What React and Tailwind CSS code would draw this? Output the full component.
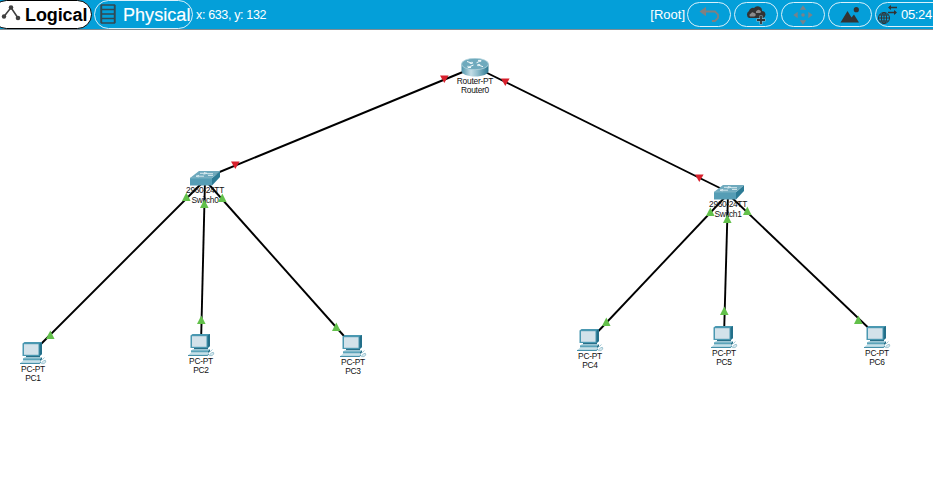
const pcs = [
  { name: 'PC1', x: 20, y: 342 },
  { name: 'PC2', x: 188, y: 334 },
  { name: 'PC3', x: 340, y: 335 },
  { name: 'PC4', x: 577, y: 329 },
  { name: 'PC5', x: 711, y: 326 },
  { name: 'PC6', x: 864, y: 326 },
];

const links = [
  [475, 67, 205, 178],
  [475, 67, 728, 192],
  [205, 180, 33, 352],
  [205, 180, 201, 344],
  [205, 180, 352, 345],
  [728, 194, 590, 340],
  [728, 194, 724, 336],
  [728, 194, 877, 336],
];

const down = [[444, 79], [505, 82], [235, 165], [699, 178]];
const up = [
  [186, 197], [204, 204], [222, 198], [710, 212], [727, 219], [747, 211],
  [50, 335], [201, 320], [336, 327], [606, 322], [724, 311], [858, 320],
];

function Links() {
  return (
    <svg className="absolute left-0 top-0" width="933" height="477" viewBox="0 0 933 477">
      {links.map(([a, b, c, d], i) => (
        <line key={i} x1={a} y1={b} x2={c} y2={d} stroke="#000" strokeWidth="1.9" />
      ))}
    </svg>
  );
}

function Status() {
  return (
    <svg className="absolute left-0 top-0" width="933" height="477" viewBox="0 0 933 477">
      {down.map(([x, y], i) => (
        <path key={i} d={`M${x - 4} ${y - 3.5}h8.6l-4.3 7.5z`} fill="#d8202c" />
      ))}
      {up.map(([x, y], i) => (
        <path key={i} d={`M${x - 4} ${y + 4}h8.6l-4.3-8.5z`} fill="#62c04a" />
      ))}
    </svg>
  );
}

function PcIcon() {
  return (
    <svg width="28" height="23" viewBox="0 0 28 23">
      <path d="M2.5 1.5L4.5 0h17.5v12l-2 2H2.5z" fill="#4a98b1" />
      <path d="M19.5 1.5L22 0v12l-2.5 2z" fill="#236f89" />
      <path d="M4 2.2h14.5v10.6H4z" fill="#d3e2ea" />
      <path d="M6 14h14v1.5H6z" fill="#286f88" />
      <path d="M3 16.5l2-1.3h17l-2 2H3z" fill="#a2cbd8" />
      <path d="M3 16.5h17v2H3z" fill="#5ba3b9" />
      <path d="M20 17l2-1.8v2.3l-2 1.5z" fill="#236e87" />
      <path d="M2.5 19.2H21L19.3 21.3H0z" fill="#b4d6e1" />
      <path d="M0 21h19.3l1.7-1.8v1.3L19.5 22H0z" fill="#4590a9" />
      <path d="M21.5 18.3l3-2.8M22 20.3l1.7-1.7 1.8-.2.3 1.7-1.8 1.5h-2.5z" stroke="#8dbac9" strokeWidth=".8" fill="#d7e9ef" />
    </svg>
  );
}

function SwitchIcon() {
  return (
    <svg width="30" height="15" viewBox="0 0 30 15">
      <path d="M0 7L9 0h21l-8 7z" fill="#6ea9bd" />
      <path d="M0 7h22v7.5H0z" fill="#559db5" />
      <path d="M22 7l8-7v6l-8 8.5z" fill="#2c7b95" />
      <path d="M0 7h22L30 0" fill="none" stroke="#8ec0cf" strokeWidth=".6" />
      <path d="M10 2.3h5M14 1.5l3 .8-3.5.9M18 4.4h5M8 5.2h6M9 4.3l-3 .9 2.5.7M17 2.7h6" fill="none" stroke="#e1eff4" strokeWidth=".9" />
    </svg>
  );
}

function RouterIcon() {
  return (
    <svg width="28" height="19" viewBox="0 0 28 19">
      <defs>
        <linearGradient id="side" x1="0" x2="1" y1="0" y2="0">
          <stop offset="0" stopColor="#4d94ab" />
          <stop offset=".35" stopColor="#c3dde6" />
          <stop offset=".6" stopColor="#8dbccb" />
          <stop offset="1" stopColor="#2b7790" />
        </linearGradient>
      </defs>
      <path d="M.5 6v7c0 3 6 5.5 13.5 5.5S27.5 16 27.5 13V6z" fill="url(#side)" />
      <ellipse cx="14" cy="6" rx="13.5" ry="5.7" fill="#6faabd" stroke="#b3d3dd" strokeWidth=".8" />
      <path d="M6 3.5l5 1.7M8.7 5.3l2.8 0-.5-1.5M22 8.7l-5-1.8M19.2 6.7h-2.6l.5 1.5M15.5 4.8l4-2M17 2.4l3 0-.5 1.5M12.5 7l-5 2.2M7 7.8v1.7h3" fill="none" stroke="#f2fafc" strokeWidth="1" />
    </svg>
  );
}

function Node({ x, y, width, lines, children }) {
  return (
    <div className="absolute" style={{ left: x, top: y, width }}>
      {children}
      <div className="flex flex-col items-center whitespace-nowrap text-[8.4px] leading-[9px] tracking-[-0.25px] text-[#111]">
        {lines.map((l) => <span key={l}>{l}</span>)}
      </div>
    </div>
  );
}

function Labels({ x, y, lines }) {
  return (
    <div className="absolute flex w-10 flex-col items-center whitespace-nowrap text-[8.4px] leading-[9.5px] tracking-[-0.35px] text-[#111]" style={{ left: x - 20, top: y }}>
      {lines.map((l) => <span key={l}>{l}</span>)}
    </div>
  );
}

function Tool({ children }) {
  return (
    <div className="flex h-[25px] w-11 shrink-0 items-center justify-center rounded-full border border-[#d9f1fb]">
      {children}
    </div>
  );
}

function Header() {
  return (
    <header className="flex h-[30px] w-full items-start overflow-hidden border-b border-[#7f8c93] bg-[#049fd9] text-white">
      <div className="-ml-2 flex h-[29px] w-[100px] shrink-0 items-center rounded-full border border-black bg-white pl-[7px] text-black">
        <svg className="mb-[3px] shrink-0" width="22" height="20" viewBox="0 0 22 20">
          <path d="M4 13.5L11 4.5l7 10.5" fill="none" stroke="#404040" strokeWidth="1.6" />
          <circle cx="4" cy="13.5" r="2.2" fill="#404040" />
          <circle cx="11" cy="4.5" r="2.3" fill="#404040" />
          <circle cx="18" cy="15" r="2.3" fill="#404040" />
        </svg>
        <span className="ml-[3px] text-[18px] font-bold leading-[28px] tracking-[-0.1px]">Logical</span>
      </div>
      <div className="ml-[2px] flex h-[29px] w-[99px] shrink-0 items-center rounded-full border border-[#d9f1fb] pl-[5px]">
        <svg className="mb-[2px] shrink-0" width="16" height="20" viewBox="0 0 16 20">
          <path d="M1.5 1h13v18h-13zM1.5 5.5h13M1.5 10h13M1.5 14.5h13" fill="none" stroke="#334952" strokeWidth="1.3" />
          <path d="M1.2 1v18M14.8 1v18" stroke="#334952" strokeWidth="1.7" />
        </svg>
        <span className="ml-[7px] text-[18px] leading-[28px] tracking-[0.05px] [-webkit-text-stroke:0.15px_white]">Physical</span>
      </div>
      <span className="ml-[3px] whitespace-nowrap text-[12.5px] leading-[30px] tracking-[-0.35px]">x: 633, y: 132</span>
      <span className="ml-auto whitespace-nowrap text-[13px] leading-[29px]">[Root]</span>
      <div className="ml-[2px] mt-[2px] flex w-[246px] shrink-0 gap-[3px]">
        <Tool>
          <svg width="22" height="18" viewBox="0 0 22 18">
            <path d="M7 5.5h10l3 3v3.5l-3 3h-3" fill="none" stroke="#808080" strokeWidth="1.8" />
            <path d="M8 .8v9.4L1.5 5.5z" fill="#808080" />
          </svg>
        </Tool>
        <Tool>
          <svg width="22" height="20" viewBox="0 0 22 20">
            <path d="M4 13a4 4 0 0 1 0-7A4 4 0 0 1 9 3a4.5 4.5 0 0 1 8 3 3.6 3.6 0 0 1 1 7z" fill="#333" />
            <path d="M5 11.5a2 2 0 0 1 1-3 2 2 0 0 1 3-.5 1.6 1.6 0 0 1 0 3.5zM11 8a2 2 0 0 1 1-2.5 2 2 0 0 1 3 0A1.3 1.3 0 0 1 15 8z" fill="#8c8c8c" />
            <path d="M16 10.5v9M11.5 15h9" stroke="#9ab9c6" strokeWidth="3" />
            <path d="M16 11v8M12 15h8" stroke="#333" strokeWidth="1.8" />
          </svg>
        </Tool>
        <Tool>
          <svg width="20" height="20" viewBox="0 0 20 20">
            <path d="M10 .3l3.2 4.4H6.8zM10 19.7l3.2-4.4H6.8zM.3 10l4.4-3.2v6.4zM19.7 10l-4.4-3.2v6.4z" fill="#78828a" />
            <circle cx="10" cy="10" r="1.8" fill="#78828a" />
          </svg>
        </Tool>
        <Tool>
          <svg width="20" height="18" viewBox="0 0 20 18">
            <path d="M.5 16.5L7.5 5l4 6.5L14 8.5l5 8z" fill="#333" />
            <circle cx="16.3" cy="3.7" r="2.6" fill="#333" />
          </svg>
        </Tool>
        <div className="flex h-[25px] w-20 shrink-0 items-center rounded-full border border-[#d9f1fb] pl-[1px]">
          <svg className="shrink-0" width="21" height="21" viewBox="0 0 21 21">
            <g fill="none" stroke="#333" strokeWidth="1">
              <circle cx="7" cy="14" r="5.5" />
              <ellipse cx="7" cy="14" rx="2.6" ry="5.5" />
              <path d="M1.5 14h11M2.5 11h9M2.5 17h9M7 8.5v11" />
              <path d="M12 3.5h8M11 8.5h8" strokeWidth="1.5" />
            </g>
            <path d="M14 1v5l-3-2.5zM17 6v5l3-2.5z" fill="#333" />
          </svg>
          <span className="ml-[3px] text-[13px] leading-none tracking-[-0.35px]">05:24</span>
        </div>
      </div>
    </header>
  );
}

export default function App() {
  return (
    <div className="relative h-[477px] w-[933px] overflow-hidden bg-white font-['Liberation_Sans',Arial,sans-serif]">
      <Header />
      <Links />
      <Node x={461} y={58} width={28} lines={['Router-PT', 'Router0']}><RouterIcon /></Node>
      <div className="absolute left-[190px] top-[171px]"><SwitchIcon /></div>
      <div className="absolute left-[714px] top-[185px]"><SwitchIcon /></div>
      {pcs.map((p) => (
        <Node key={p.name} x={p.x} y={p.y} width={26} lines={['PC-PT', p.name]}><PcIcon /></Node>
      ))}
      <Labels x={205} y={186} lines={['2960-24TT', 'Switch0']} />
      <Labels x={728} y={200} lines={['2960-24TT', 'Switch1']} />
      <Status />
    </div>
  );
}
